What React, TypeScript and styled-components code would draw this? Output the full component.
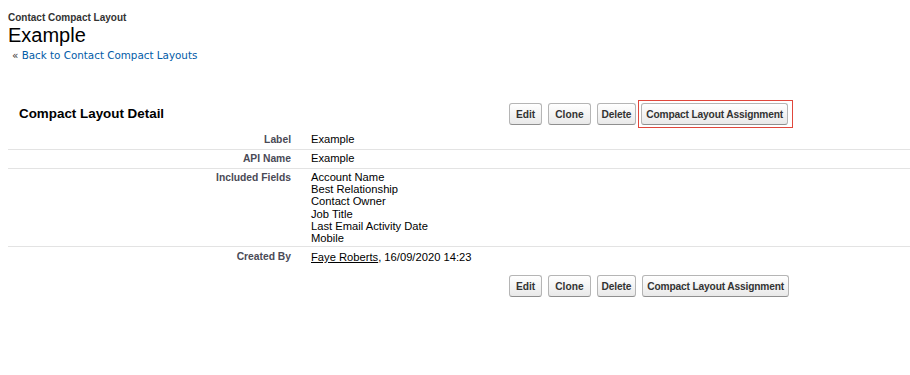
import React from "react";
import styled, { createGlobalStyle } from "styled-components";

const GlobalStyle = createGlobalStyle`
  body {
    margin: 0;
    background: #ffffff;
    font-family: "Liberation Sans", Arial, sans-serif;
    color: #000;
  }
`;

const Page = styled.div`
  width: 910px;
  height: 375px;
  padding: 12px 0 0 8px;
  box-sizing: border-box;
  overflow: hidden;
`;

const Header = styled.div`
  display: flex;
  flex-direction: column;
`;

const TypeName = styled.div`
  font-size: 10px;
  font-weight: bold;
  color: #333333;
  line-height: 12px;
`;

const PageTitle = styled.h1`
  margin: 0;
  font-size: 20px;
  font-weight: normal;
  line-height: 22px;
  color: #000;
`;

const Breadcrumb = styled.div`
  margin-top: 3px;
  padding-left: 4px;
  font-family: "DejaVu Sans", Verdana, sans-serif;
  font-size: 10.35px;
  line-height: 13px;
  color: #333;
`;

const Link = styled.a`
  color: #015ba7;
  text-decoration: none;
`;

const Block = styled.div`
  margin-top: 36px;
`;

const BlockHeader = styled.div`
  display: flex;
  align-items: center;
  height: 30px;
  margin-bottom: 3px;
`;

const BlockTitle = styled.h2`
  margin: 0;
  width: 490px;
  padding-left: 11px;
  font-size: 13.4px;
  font-weight: bold;
  color: #000;
`;

const Buttons = styled.div`
  display: flex;
  align-items: center;
  gap: 6px;
  padding-top: 2px;
`;

const Button = styled.button<{ $tight?: boolean }>`
  height: 22px;
  padding: 0 ${(p) => (p.$tight ? "4px" : "6px")};
  font-family: "Liberation Sans", Arial, sans-serif;
  font-size: 10.2px;
  font-weight: bold;
  letter-spacing: ${(p) => (p.$tight ? "-0.15px" : "0")};
  color: #333;
  background: linear-gradient(#ffffff, #e9e9e9);
  border: 1px solid #b5b5b5;
  border-bottom-color: #8f8f8f;
  border-radius: 3px;
  cursor: pointer;
`;

const Highlight = styled.span`
  display: inline-flex;
  padding: 2px 4px 2px 2px;
  margin-left: -4px;
  border: 1px solid #e0473c;
`;

const Row = styled.div<{ $last?: boolean }>`
  display: grid;
  grid-template-columns: 293px 1fr;
  min-height: 18px;
  border-bottom: 1px solid ${(p) => (p.$last ? "transparent" : "#e3e3e3")};
`;

const RowLabel = styled.div<{ $low?: boolean }>`
  padding: ${(p) => (p.$low ? "4px" : "3px")} 10px 2px 0;
  text-align: right;
  font-size: 10.3px;
  font-weight: bold;
  line-height: 12px;
  color: #4a4a56;
`;

const RowValue = styled.div<{ $low?: boolean }>`
  padding: ${(p) => (p.$low ? "4px" : "2px")} 0 2px 10px;
  font-size: 11.2px;
  line-height: 12.2px;
  color: #000;
`;

const UserLink = styled.a`
  color: #000;
  text-decoration: underline;
`;

const FooterButtons = styled.div`
  display: flex;
  gap: 6px;
  margin-top: 9px;
  padding-left: 501px;
`;

const fields = [
  "Account Name",
  "Best Relationship",
  "Contact Owner",
  "Job Title",
  "Last Email Activity Date",
  "Mobile",
];

export default function App() {
  return (
    <>
      <GlobalStyle />
      <Page>
        <Header>
          <TypeName>Contact Compact Layout</TypeName>
          <PageTitle>Example</PageTitle>
          <Breadcrumb>
            « <Link href="#">Back to Contact Compact Layouts</Link>
          </Breadcrumb>
        </Header>
        <Block>
          <BlockHeader>
            <BlockTitle>Compact Layout Detail</BlockTitle>
            <Buttons>
              <Button>Edit</Button>
              <Button>Clone</Button>
              <Button $tight>Delete</Button>
              <Highlight>
                <Button $tight>Compact Layout Assignment</Button>
              </Highlight>
            </Buttons>
          </BlockHeader>
          <Row>
            <RowLabel>Label</RowLabel>
            <RowValue>Example</RowValue>
          </Row>
          <Row>
            <RowLabel>API Name</RowLabel>
            <RowValue>Example</RowValue>
          </Row>
          <Row>
            <RowLabel>Included Fields</RowLabel>
            <RowValue>
              {fields.map((f) => (
                <div key={f}>{f}</div>
              ))}
            </RowValue>
          </Row>
          <Row $last>
            <RowLabel $low>Created By</RowLabel>
            <RowValue $low>
              <UserLink href="#">Faye Roberts</UserLink>, 16/09/2020 14:23
            </RowValue>
          </Row>
          <FooterButtons>
            <Button>Edit</Button>
            <Button>Clone</Button>
            <Button $tight>Delete</Button>
            <Button $tight>Compact Layout Assignment</Button>
          </FooterButtons>
        </Block>
      </Page>
    </>
  );
}
